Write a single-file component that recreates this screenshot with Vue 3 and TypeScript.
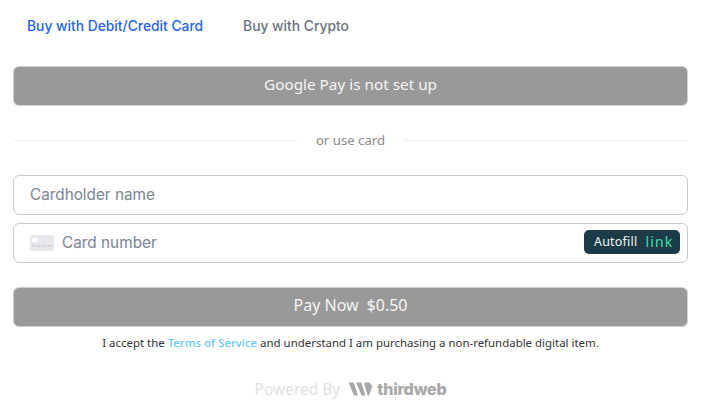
<script setup lang="ts">
const tabs: { label: string; active: boolean }[] = [
  { label: 'Buy with Debit/Credit Card', active: true },
  { label: 'Buy with Crypto', active: false },
]
</script>

<template>
  <div class="page">
    <nav class="tabs">
      <span v-for="t in tabs" :key="t.label" class="tab" :class="{ active: t.active }">{{ t.label }}</span>
    </nav>
    <button class="btn gpay"><span class="label">Google Pay is not set up</span></button>
    <div class="divider"><span class="line"></span><span class="or">or use card</span><span class="line"></span></div>
    <div class="field name"><span class="ph">Cardholder name</span></div>
    <div class="field number">
      <svg class="card" width="24" height="16" viewBox="0 0 24 16">
        <rect width="24" height="16" rx="1.5" fill="#e6e7ea" />
        <rect x="2" y="3" width="6" height="4" fill="#fbfbfc" />
        <path d="M2 11h4M7.500 11h4M13 11h4M18.500 11h3.500" stroke="#c4c6cb" stroke-width="1.600" stroke-dasharray="1 .6" />
      </svg>
      <span class="ph num">Card number</span>
      <span class="autofill"><span>Autofill</span><span class="link">link</span></span>
    </div>
    <button class="btn pay"><span class="label">Pay Now</span><span class="label">$0.50</span></button>
    <p class="terms">I accept the <span class="tos">Terms of Service</span> and understand I am purchasing a non-refundable digital item.</p>
    <footer class="powered">
      <span class="by">Powered By</span>
      <svg width="24" height="14" viewBox="0 0 24 14" class="logo">
        <path d="M0 .5h5.200L9.500 13.500H5.600zM7.600 .5h5.200L17 13.500h-3.900zM15.500 .5h5.200l3.300 3.500-3.500 9.500h-1.500z" fill="#a8a8a8" />
      </svg>
      <span class="brand">thirdweb</span>
    </footer>
  </div>
</template>

<style scoped>
.page {
  width: 701px;
  height: 420px;
  box-sizing: border-box;
  padding: 0 13px;
  background: #fff;
  display: flex;
  flex-direction: column;
  font-family: "Noto Sans", sans-serif;
  overflow: hidden;
}
.tabs {
  display: flex;
  gap: 40px;
  padding: 18px 14px 0;
  height: 47px;
  box-sizing: border-box;
  font-family: Inter, sans-serif;
  font-size: 13.84px;
  font-weight: 500;
  line-height: 17px;
  color: #6b7280;
}
.tab.active { color: #2563eb; }
.btn {
  display: flex;
  align-items: center;
  justify-content: center;
  gap: 8px;
  height: 40px;
  border: 1px solid #d0d0d0;
  border-radius: 6px;
  background: #999;
  color: #f5f5f5;
  font-family: "Noto Sans", sans-serif;
  font-size: 16px;
  padding: 0;
}
.label { margin-bottom: 4px; }
.gpay { margin-top: 19px; font-size: 15.3px; }
.divider {
  display: flex;
  align-items: center;
  gap: 19px;
  margin-top: 24px;
  height: 20px;
  color: #8a8a8a;
  font-size: 13.2px;
}
.line { flex: 1; height: 1px; background: #f1f1f1; }
.field {
  height: 40px;
  box-sizing: border-box;
  border: 1px solid #c9c9c9;
  border-radius: 6px;
  display: flex;
  align-items: center;
  font-family: Inter, sans-serif;
  font-size: 15.3px;
  color: #7b8494;
}
.ph { margin-bottom: 2px; }
.name { margin-top: 25px; padding-left: 16px; }
.number { margin-top: 8px; padding: 0 7px 0 16px; }
.num { font-size: 15.35px; }
.card { margin-right: 8px; margin-bottom: 1px; }
.autofill {
  margin-left: auto;
  margin-bottom: 2px;
  height: 24px;
  width: 96px;
  box-sizing: border-box;
  padding-left: 10px;
  border-radius: 5px;
  background: #1c3a47;
  color: #f1f5f5;
  display: flex;
  gap: 8px;
  font-family: "Noto Sans", sans-serif;
  font-size: 12.500px;
  letter-spacing: 0.2px;
  line-height: 23px;
}
.link { color: #3be0ad; font-size: 14px; letter-spacing: 1.2px; }
.pay { margin-top: 24px; }
.terms {
  margin: 7px 0 0;
  text-align: center;
  font-size: 11.450px;
  line-height: 18px;
  color: #333;
}
.tos { color: #66c9f5; font-weight: 500; }
.powered {
  display: flex;
  align-items: center;
  justify-content: center;
  margin-top: 27px;
  height: 20px;
}
.by { color: #e2e2e2; font-size: 15.500px; margin-right: 8px; }
.logo { margin-right: 4px; width: 25px; }
.brand {
  font-family: Inter, sans-serif;
  font-weight: 800;
  font-size: 16px;
  letter-spacing: -0.2px;
  color: #a8a8a8;
}
</style>
